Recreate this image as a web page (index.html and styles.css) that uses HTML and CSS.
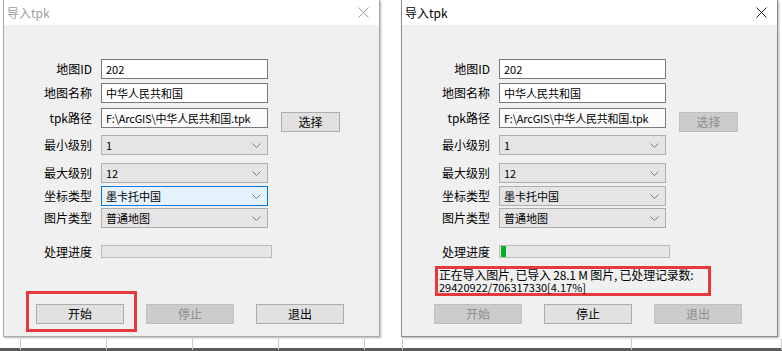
FILE: index.html
```html
<!doctype html>
<html>
<head>
    <title>导入tpk</title>
    <meta http-equiv="Content-Type" content="text/html; charset=utf-8" />
    <link rel="stylesheet" href="styles.css">
</head>
<body>
<div class="desk">
    <div class="win inactive">
        <div class="titlebar">
            <span class="title">导入tpk</span>
            <svg class="close" width="11" height="11" viewBox="0 0 11 11"><path d="M0.5 0.5L10.5 10.5M10.5 0.5L0.5 10.5" /></svg>
        </div>
        <div class="form">
            <div class="row r-id"><label>地图ID</label><div class="field">202</div></div>
            <div class="row r-name"><label>地图名称</label><div class="field">中华人民共和国</div></div>
            <div class="row r-path"><label>tpk路径</label><div class="field ro">F:\ArcGIS\中华人民共和国.tpk</div><div class="btn pick">选择</div></div>
            <div class="row r-min"><label>最小级别</label><div class="field select">1<svg width="9" height="5" viewBox="0 0 9 5"><path d="M0.5 0.5L4.5 4.5L8.5 0.5" /></svg></div></div>
            <div class="row r-max"><label>最大级别</label><div class="field select">12<svg width="9" height="5" viewBox="0 0 9 5"><path d="M0.5 0.5L4.5 4.5L8.5 0.5" /></svg></div></div>
            <div class="row r-crs"><label>坐标类型</label><div class="field select focus">墨卡托中国<svg width="9" height="5" viewBox="0 0 9 5"><path d="M0.5 0.5L4.5 4.5L8.5 0.5" /></svg></div></div>
            <div class="row r-img"><label>图片类型</label><div class="field select">普通地图<svg width="9" height="5" viewBox="0 0 9 5"><path d="M0.5 0.5L4.5 4.5L8.5 0.5" /></svg></div></div>
            <div class="row r-prog"><label>处理进度</label><div class="progress"></div></div>
            <div class="status empty"></div>
            <div class="buttons">
                <div class="btn marked">开始</div>
                <div class="btn off">停止</div>
                <div class="btn">退出</div>
            </div>
        </div>
    </div>

    <div class="win">
        <div class="titlebar">
            <span class="title">导入tpk</span>
            <svg class="close" width="11" height="11" viewBox="0 0 11 11"><path d="M0.5 0.5L10.5 10.5M10.5 0.5L0.5 10.5" /></svg>
        </div>
        <div class="form">
            <div class="row r-id"><label>地图ID</label><div class="field">202</div></div>
            <div class="row r-name"><label>地图名称</label><div class="field">中华人民共和国</div></div>
            <div class="row r-path"><label>tpk路径</label><div class="field ro">F:\ArcGIS\中华人民共和国.tpk</div><div class="btn pick off">选择</div></div>
            <div class="row r-min"><label>最小级别</label><div class="field select">1<svg width="9" height="5" viewBox="0 0 9 5"><path d="M0.5 0.5L4.5 4.5L8.5 0.5" /></svg></div></div>
            <div class="row r-max"><label>最大级别</label><div class="field select">12<svg width="9" height="5" viewBox="0 0 9 5"><path d="M0.5 0.5L4.5 4.5L8.5 0.5" /></svg></div></div>
            <div class="row r-crs"><label>坐标类型</label><div class="field select">墨卡托中国<svg width="9" height="5" viewBox="0 0 9 5"><path d="M0.5 0.5L4.5 4.5L8.5 0.5" /></svg></div></div>
            <div class="row r-img"><label>图片类型</label><div class="field select">普通地图<svg width="9" height="5" viewBox="0 0 9 5"><path d="M0.5 0.5L4.5 4.5L8.5 0.5" /></svg></div></div>
            <div class="row r-prog"><label>处理进度</label><div class="progress"><div class="fill" style="width:5px"></div></div></div>
            <div class="status">
                <div class="line1">正在导入图片, 已导入 28.1 M 图片, 已处理记录数:</div>
                <div class="line2">29420922/706317330[4.17%]</div>
            </div>
            <div class="buttons">
                <div class="btn off">开始</div>
                <div class="btn">停止</div>
                <div class="btn off">退出</div>
            </div>
        </div>
    </div>
</div>
<div class="under">
    <div class="cell c1"></div>
    <div class="cell c2"></div>
    <div class="cell c3"></div>
    <div class="cell c4"></div>
    <div class="cell c5"></div>
    <div class="cell c6"></div>
    <div class="cell c7"></div>
    <div class="cell c8"></div>
</div>
</body>
</html>
```

FILE: styles.css
```css
*             { box-sizing:border-box; }
body          { margin:0; width:782px; height:351px; overflow:hidden; background:#fff; color:#000; font-family:"Noto Sans CJK SC", "Noto Sans", sans-serif; font-size:12px; }

.desk         { display:flex; gap:21px; padding-left:3px; height:337px; }
.win          { width:377px; height:337px; background:#f0f0f0; border:1px solid #8c8c8c; border-top:0; display:flex; flex-direction:column; box-shadow:1px 1px 2px rgba(0,0,0,.3); }
.win.inactive { border-color:#a8a8a8; }

.titlebar     { height:25px; flex:none; background:#fff; display:flex; align-items:center; justify-content:space-between; padding:0 10px 0 3px; }
.title        { line-height:16px; }
.close path   { stroke:#222; stroke-width:1; fill:none; }
.inactive .title      { color:#9c9c9c; }
.inactive .close path { stroke:#9c9c9c; }

.form         { display:flex; flex-direction:column; }
.row          { display:flex; align-items:center; height:20px; }
.row label    { width:88px; margin-right:9px; text-align:right; line-height:16px; white-space:nowrap; }
.r-id         { margin-top:34px; }
.r-name       { margin-top:4px; }
.r-path       { margin-top:5px; }
.r-min        { margin-top:7px; }
.r-max        { margin-top:8px; }
.r-crs        { margin-top:3px; }
.r-img        { margin-top:2px; }
.r-prog       { margin-top:17px; height:13px; }

.field        { width:167px; height:20px; border:1px solid #7a7a7a; background:#fff; padding:0 4px; font-size:11px; line-height:18px; white-space:nowrap; overflow:hidden; }
.field.ro     { background:#fbfbfb; letter-spacing:-0.2px; }
.select       { background:#e5e5e5; border-color:#adadad; display:flex; align-items:center; justify-content:space-between; padding-right:6px; }
.select svg path { stroke:#7a7a7a; stroke-width:1; fill:none; }
.select.focus { background:#e5f1fb; border-color:#0078d7; }

.progress     { width:171px; height:13px; background:#e6e6e6; border:1px solid #bcbcbc; padding:0 1px; }
.fill         { height:11px; background:#06b025; }

.status       { margin:8px 0 0 33px; width:276px; height:30px; border:3px solid #e6393b; padding:0 1px; white-space:nowrap; }
.status.empty { border-color:transparent; }
.line1        { height:12px; line-height:12px; font-size:12px; letter-spacing:-0.2px; }
.line2        { height:12px; line-height:12px; font-size:11px; }

.buttons      { display:flex; gap:22px; margin-top:8px; padding-left:32px; }
.btn          { width:88px; height:20px; background:#e1e1e1; border:1px solid #adadad; text-align:center; line-height:18px; }
.btn.off      { background:#cccccc; border-color:#bfbfbf; color:#8d8d8d; }
.btn.pick     { width:59px; margin-left:13px; align-self:flex-start; margin-top:4px; }
.btn.marked   { position:relative; }
.btn.marked::after { content:""; position:absolute; left:-11px; right:-14px; top:-14px; bottom:-9px; border:3px solid #e6393b; }

.under        { display:flex; height:14px; padding-left:3px; border-bottom:3px solid #5a5a5a; }
.cell         { height:11px; margin-top:2px; border-right:1px solid #c8c8c8; }
.c1           { width:18px; }
.c2           { width:86px; }
.c3           { width:86px; }
.c4           { width:86px; }
.c5           { width:86px; }
.c6           { width:38px; }
.c7           { width:230px; }
.c8           { width:150px; }
```
